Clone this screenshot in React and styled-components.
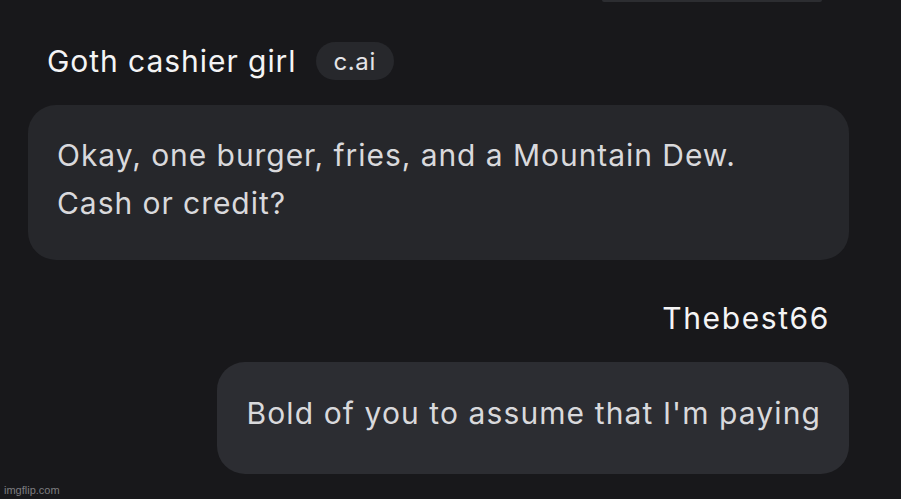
import React from "react";
import styled, { createGlobalStyle } from "styled-components";

const Global = createGlobalStyle`
  html, body { margin: 0; padding: 0; background: #18181b; }
  body { width: 901px; height: 499px; overflow: hidden; font-family: Inter, "Noto Sans", sans-serif; }
`;

const Page = styled.div`
  width: 901px;
  height: 499px;
  background: #18181b;
  display: flex;
  flex-direction: column;
  padding: 0 52px 0 28px;
  box-sizing: border-box;
  position: relative;
  font-family: Inter, "Noto Sans", sans-serif;
`;

const PrevStub = styled.div`
  align-self: flex-end;
  margin-right: 27px;
  width: 220px;
  height: 2px;
  background: #2c2d31;
  border-radius: 0 0 10px 10px;
`;

const Header = styled.div`
  display: flex;
  align-items: center;
  gap: 19px;
  margin-top: 40px;
  padding-left: 19px;
`;

const Name = styled.span`
  font-size: 30px;
  color: #f4f4f5;
  letter-spacing: 0.95px;
  line-height: 36px;
  font-weight: 400;
`;

const Badge = styled.span`
  font-size: 24px;
  color: #e4e4e7;
  background: #27282c;
  border-radius: 19px;
  height: 38px;
  padding: 0 18px;
  display: flex;
  align-items: center;
  letter-spacing: 0.6px;
`;

const Bubble = styled.div`
  align-self: ${(p) => (p.$right ? "flex-end" : "stretch")};
  background: ${(p) => (p.$right ? "#2c2d32" : "#26272b")};
  border-radius: 28px;
  padding: ${(p) => (p.$right ? "27px 28px 37px 29px" : "26px 29px 33px 29px")};
  margin-top: ${(p) => p.$mt}px;
  font-size: 30px;
  line-height: 48px;
  color: #d9d9dc;
  letter-spacing: ${(p) => (p.$right ? "1.1px" : "0.95px")};
`;

const RightName = styled.div`
  align-self: flex-end;
  margin-right: 19px;
  margin-top: 40px;
  font-size: 30px;
  line-height: 36px;
  color: #f4f4f5;
  letter-spacing: 1.6px;
`;

const Watermark = styled.span`
  position: absolute;
  left: 4px;
  bottom: 3px;
  font-family: "Liberation Sans", Arial, sans-serif;
  font-size: 11px;
  color: #7d7d80;
`;

export default function App() {
  return (
    <>
      <Global />
      <Page>
        <PrevStub />
        <Header>
          <Name>Goth cashier girl</Name>
          <Badge>c.ai</Badge>
        </Header>
        <Bubble $mt={25}>
          Okay, one burger, fries, and a Mountain Dew.
          <br />
          Cash or credit?
        </Bubble>
        <RightName>Thebest66</RightName>
        <Bubble $right $mt={26}>Bold of you to assume that I'm paying</Bubble>
        <Watermark>imgflip.com</Watermark>
      </Page>
    </>
  );
}
